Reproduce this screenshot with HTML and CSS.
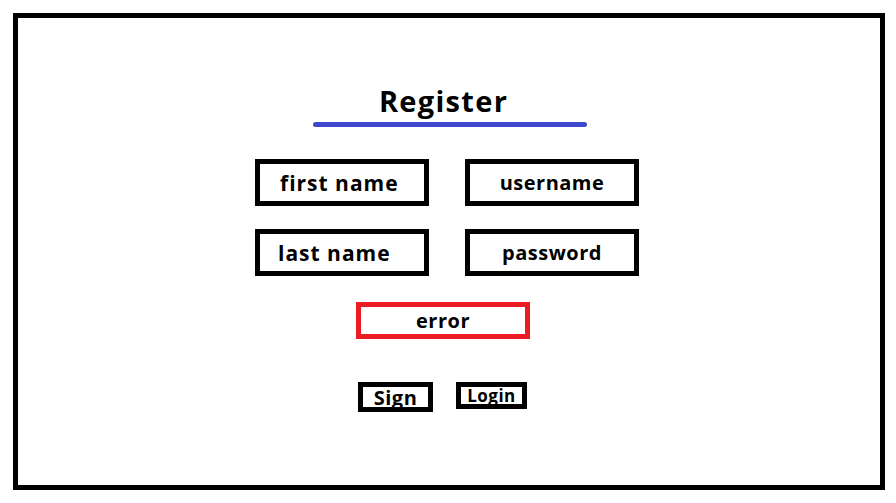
FILE: index.html
```html
<!DOCTYPE html>
<html>
<head>
  <title>Register</title>
  <link rel="stylesheet" href="styles.css">
</head>
<body>
  <div class="frame">
    <h1 class="title">Register</h1>
    <div class="title-line"></div>

    <!-- input fields -->
    <div class="fields">
      <div class="field field-big first">first name</div>
      <div class="field">username</div>
      <div class="field field-big last">last name</div>
      <div class="field">password</div>
    </div>

    <div class="error">error</div>

    <div class="buttons">
      <div class="button sign">Sign</div>
      <div class="button login">Login</div>
    </div>
  </div>
</body>
</html>
```

FILE: styles.css
```css
body {
  margin: 0;
  padding: 0;
  background-color: #fff;
  font-family: "Open Sans", Lato, sans-serif;
  font-weight: 700;
  color: #000;
}

.frame {
  box-sizing: border-box;
  margin: 13px;
  width: 872px;
  height: 477px;
  border: 5px solid #000;
  display: flex;
  flex-direction: column;
  align-items: center;
}

.title {
  margin: 66px 11px 0 0;
  font-size: 29px;
  line-height: 34px;
  font-weight: 700;
  letter-spacing: 1.3px;
}

.title-line {
  width: 274px;
  height: 5px;
  margin-top: 4px;
  margin-left: 2px;
  background-color: #3f48cc;
  border-radius: 3px;
}

.fields {
  display: grid;
  grid-template-columns: 174px 174px;
  grid-auto-rows: 47px;
  column-gap: 36px;
  row-gap: 23px;
  margin-top: 32px;
  margin-right: 4px;
}

.field {
  box-sizing: border-box;
  border: 5px solid #000;
  display: flex;
  justify-content: center;
  align-items: center;
  font-size: 20px;
  letter-spacing: 0.5px;
}

.field-big {
  justify-content: flex-start;
  font-size: 21px;
  letter-spacing: 1px;
}

.first {
  padding-left: 20px;
}

.last {
  padding-left: 18px;
}

.error {
  box-sizing: border-box;
  width: 174px;
  height: 37px;
  margin-top: 26px;
  margin-right: 12px;
  border: 5px solid #ed1c24;
  display: flex;
  justify-content: center;
  align-items: center;
  font-size: 20px;
  letter-spacing: 0.5px;
}

.buttons {
  display: flex;
  align-items: flex-start;
  gap: 23px;
  margin-top: 43px;
  margin-right: 13px;
}

.button {
  box-sizing: border-box;
  border: 5px solid #000;
  display: flex;
  justify-content: center;
  align-items: center;
}

.sign {
  width: 75px;
  height: 30px;
  font-size: 20px;
  letter-spacing: 0.5px;
}

.login {
  width: 71px;
  height: 27px;
  font-size: 17px;
  letter-spacing: 0.5px;
}
```
